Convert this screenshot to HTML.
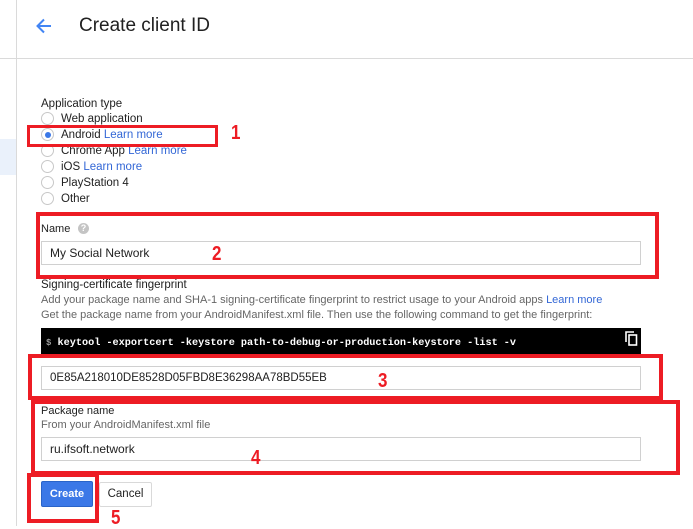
<!DOCTYPE html>
<html><head><meta charset="utf-8"><style>
*{margin:0;padding:0;box-sizing:border-box}
body{width:693px;height:526px;background:#fff;font-family:"Liberation Sans",Arial,sans-serif;color:#212121;position:relative;overflow:hidden;font-size:11.5px}
.a{position:absolute;white-space:nowrap}
.t{position:absolute;white-space:nowrap;height:16px;line-height:16px}
.lnk{color:#3367d6}
.rb{position:absolute;border:4px solid #ed1c24}
.num{position:absolute;color:#ed1c24;font-weight:bold;font-size:20px;line-height:20px;transform:scaleX(0.85);transform-origin:left}
.radio{position:absolute;left:41px;width:13px;height:13px;border:1px solid #c8c8c8;border-radius:50%;background:#fff}
.inp{position:absolute;left:41px;width:600px;height:24px;border:1px solid #d0d0d0;background:#fff;padding-left:8px;line-height:22px;font-size:12px}
.gray{color:#666}
</style></head><body>
<div class="a" style="left:16px;top:0;width:1px;height:526px;background:#dadada"></div>
<div class="a" style="left:0;top:139px;width:16px;height:36px;background:#eaf1fb"></div>
<div class="a" style="left:0;top:58px;width:16px;height:1px;background:#dadada"></div>
<div class="a" style="left:17px;top:58px;width:676px;height:1px;background:#dadada"></div>
<svg class="a" style="left:35px;top:17px" width="18" height="18" viewBox="0 0 18 18"><path d="M16 9H3M9 2.5L2.5 9 9 15.5" stroke="#4285f4" stroke-width="2" fill="none"/></svg>
<div class="t" style="left:79px;top:15px;font-size:19px;height:22px;line-height:22px">Create client ID</div>

<div class="t" style="left:41px;top:96px">Application type</div>
<div class="radio" style="top:112px"></div><div class="t" style="left:61px;top:111px">Web application</div>
<div class="radio" style="top:128px"></div><div class="a" style="left:45px;top:132px;width:6px;height:6px;border-radius:50%;background:#3b78e7"></div><div class="t" style="left:61px;top:127px">Android <span class="lnk">Learn more</span></div>
<div class="radio" style="top:144px"></div><div class="t" style="left:61px;top:143px">Chrome App <span class="lnk">Learn more</span></div>
<div class="radio" style="top:160px"></div><div class="t" style="left:61px;top:159px">iOS <span class="lnk">Learn more</span></div>
<div class="radio" style="top:176px"></div><div class="t" style="left:61px;top:175px">PlayStation 4</div>
<div class="radio" style="top:192px"></div><div class="t" style="left:61px;top:191px">Other</div>

<div class="t" style="left:41px;top:221px;font-size:11px">Name</div>
<div class="a" style="left:78px;top:223px;width:11px;height:11px;border-radius:50%;background:#c4c4c4;color:#fff;font-size:9px;text-align:center;line-height:11px;font-weight:bold">?</div>
<div class="inp" style="top:241px">My Social Network</div>

<div class="t" style="left:41px;top:277px">Signing-certificate fingerprint</div>
<div class="t gray" style="left:41px;top:292px;font-size:11px">Add your package name and SHA-1 signing-certificate fingerprint to restrict usage to your Android apps <span class="lnk">Learn more</span></div>
<div class="t gray" style="left:41px;top:307px;font-size:11px">Get the package name from your AndroidManifest.xml file. Then use the following command to get the fingerprint:</div>
<div class="a" style="left:41px;top:328px;width:600px;height:26px;background:#000"></div>
<div class="t" style="left:46px;top:335px;color:#fff;font-family:'Liberation Mono',monospace;font-size:10.2px;font-weight:bold"><span style="color:#999;font-size:9px">$</span> keytool -exportcert -keystore path-to-debug-or-production-keystore -list -v</div>
<svg class="a" style="left:625px;top:331px" width="13" height="15" viewBox="0 0 13 15"><path d="M1 11V1h8" stroke="#fff" stroke-width="1.6" fill="none"/><rect x="4" y="4" width="7.5" height="10" stroke="#fff" stroke-width="1.6" fill="none"/></svg>

<div class="inp" style="top:366px;font-size:11.5px">0E85A218010DE8528D05FBD8E36298AA78BD55EB</div>

<div class="t" style="left:41px;top:403px;font-size:11px">Package name</div>
<div class="t gray" style="left:41px;top:417px;font-size:11px">From your AndroidManifest.xml file</div>
<div class="inp" style="top:437px">ru.ifsoft.network</div>

<div class="a" style="left:41px;top:481px;width:52px;height:26px;background:#3b78e7;border:1px solid #2a64c8;border-radius:2px;color:#fff;font-weight:bold;font-size:11px;text-align:center;line-height:24px">Create</div>
<div class="a" style="left:99px;top:482px;width:53px;height:25px;background:#fff;border:1px solid #d9d9d9;border-radius:2px;color:#222;font-size:11.5px;text-align:center;line-height:23px">Cancel</div>

<div class="rb" style="left:27px;top:125px;width:191px;height:22px;border-width:3px"></div>
<div class="num" style="left:231px;top:123px">1</div>
<div class="rb" style="left:36px;top:212px;width:623px;height:67px"></div>
<div class="num" style="left:212px;top:244px">2</div>
<div class="rb" style="left:28px;top:354px;width:635px;height:46px"></div>
<div class="num" style="left:378px;top:371px">3</div>
<div class="rb" style="left:31px;top:400px;width:649px;height:75px"></div>
<div class="num" style="left:251px;top:448px">4</div>
<div class="rb" style="left:27px;top:473px;width:72px;height:50px"></div>
<div class="num" style="left:111px;top:508px">5</div>
</body></html>
